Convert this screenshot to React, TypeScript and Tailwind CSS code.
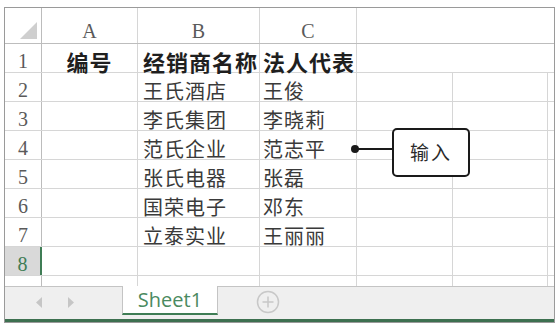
const cjk = { fontFamily: '"Noto Sans CJK SC", "Noto Sans", sans-serif' }
const serif = { fontFamily: '"Liberation Serif", serif' }

const rows: [string, string, string][] = [
  ["编号", "经销商名称", "法人代表"],
  ["", "王氏酒店", "王俊"],
  ["", "李氏集团", "李晓莉"],
  ["", "范氏企业", "范志平"],
  ["", "张氏电器", "张磊"],
  ["", "国荣电子", "邓东"],
  ["", "立泰实业", "王丽丽"],
  ["", "", ""],
]

function Row({ n, cells }: { n: number; cells: [string, string, string] }) {
  const head = n === 1
  const sel = n === 8
  const txt = head
    ? "text-[22px] tracking-[1px] font-bold text-[#1f1f1f]"
    : "text-[20px] tracking-[1px] text-[#3a3a3a]"
  return (
    <div className="flex h-[29px] border-b border-[#d6d6d6]">
      <div
        className={
          sel
            ? "w-[37px] flex items-end justify-center pb-[1px] leading-none text-[20px] bg-[#d9d9d9] text-[#3f7d55] border-r-2 border-[#3f7d55]"
            : "w-[37px] flex items-end justify-center pb-[1px] leading-none text-[20px] text-[#5a5a5a] border-r border-[#bcbcbc]"
        }
        style={serif}
      >
        {n}
      </div>
      <div className={"w-[96px] flex items-end justify-center leading-none border-r border-[#d6d6d6] " + txt} style={cjk}>
        {cells[0]}
      </div>
      <div className={"w-[122px] flex items-end pl-[5px] leading-none border-r border-[#d6d6d6] whitespace-nowrap " + txt} style={cjk}>
        {cells[1]}
      </div>
      <div className={"w-[97px] flex items-end pl-[3px] leading-none border-r border-[#d6d6d6] whitespace-nowrap " + txt} style={cjk}>
        {cells[2]}
      </div>
      <div className={head ? "w-[96px]" : "w-[96px] border-r border-[#d6d6d6]"} />
      <div className={head ? "w-[95px]" : "w-[95px] border-r border-[#d6d6d6]"} />
      <div className="flex-1" />
    </div>
  )
}

export default function App() {
  return (
    <div className="relative w-[560px] h-[328px] bg-white pt-[7px] pl-[4px] overflow-hidden">
      <div className="w-[551px] border border-[#9a9a9a] flex flex-col">
        {/* column headers */}
        <div className="flex h-[36px] border-b border-[#bdbdbd]">
          <div className="w-[37px] border-r border-[#bcbcbc] relative">
            <svg className="absolute right-[4px] bottom-[4px]" width="17" height="17" viewBox="0 0 17 17">
              <polygon points="17,0 17,17 0,17" fill="#cfcfcf" />
            </svg>
          </div>
          {["A", "B", "C"].map((c, i) => (
            <div
              key={c}
              className={
                (i === 0 ? "w-[96px]" : i === 1 ? "w-[122px]" : "w-[97px]") +
                " flex items-end justify-center pb-[2px] leading-none text-[20px] text-[#5a5a5a] border-r border-[#d6d6d6]"
              }
              style={serif}
            >
              {c}
            </div>
          ))}
          <div className="flex-1" />
        </div>

        {rows.map((r, i) => (
          <Row key={i} n={i + 1} cells={r} />
        ))}

        {/* partial row 9 */}
        <div className="flex h-[10px] overflow-hidden">
          <div className="w-[37px] border-r border-[#bcbcbc]" />
          <div className="w-[96px] border-r border-[#d6d6d6]" />
          <div className="w-[122px] border-r border-[#d6d6d6]" />
          <div className="w-[97px] border-r border-[#d6d6d6]" />
          <div className="w-[96px] border-r border-[#d6d6d6]" />
          <div className="w-[95px] border-r border-[#d6d6d6]" />
        </div>

        {/* sheet tabs */}
        <div className="flex h-[33px] bg-[#efefef]">
          <div className="w-[117px] border-t border-[#c4c4c4] flex items-center pl-[31px] gap-[26px] pb-[2px]">
            <svg width="6" height="11" viewBox="0 0 6 11">
              <polygon points="6,0 6,11 0,5.5" fill="#c6c6c6" />
            </svg>
            <svg width="6" height="11" viewBox="0 0 6 11">
              <polygon points="0,0 0,11 6,5.5" fill="#c6c6c6" />
            </svg>
          </div>
          <div className="w-[96px] h-[29px] bg-white border-x border-[#c4c4c4] border-b-2 border-b-[#3f7d55] flex items-center justify-center">
            <span className="text-[20px] leading-none text-[#4a8a60]" style={{ fontFamily: '"Open Sans", sans-serif' }}>
              Sheet1
            </span>
          </div>
          <div className="flex-1 border-t border-[#c4c4c4] flex items-center pl-[38px] pb-[2px]">
            <svg width="24" height="24" viewBox="0 0 24 24">
              <circle cx="12" cy="12" r="10.5" fill="none" stroke="#c8c8c8" strokeWidth="1.5" />
              <path d="M12 6.5v11M6.5 12h11" stroke="#c8c8c8" strokeWidth="1.5" />
            </svg>
          </div>
        </div>
        <div className="h-[3px] bg-[#3d7050]" />
      </div>

      {/* callout */}
      <div className="absolute left-[351px] top-[145px] w-[8px] h-[8px] rounded-full bg-[#1a1a1a]" />
      <div className="absolute left-[355px] top-[148px] w-[38px] h-[2px] bg-[#1a1a1a]" />
      <div
        className="absolute left-[392px] top-[128px] w-[78px] h-[49px] border-2 border-[#1a1a1a] rounded-[5px] bg-white flex items-center justify-center text-[19px] tracking-[2px] text-[#2a2a2a]"
        style={cjk}
      >
        输入
      </div>
    </div>
  )
}
